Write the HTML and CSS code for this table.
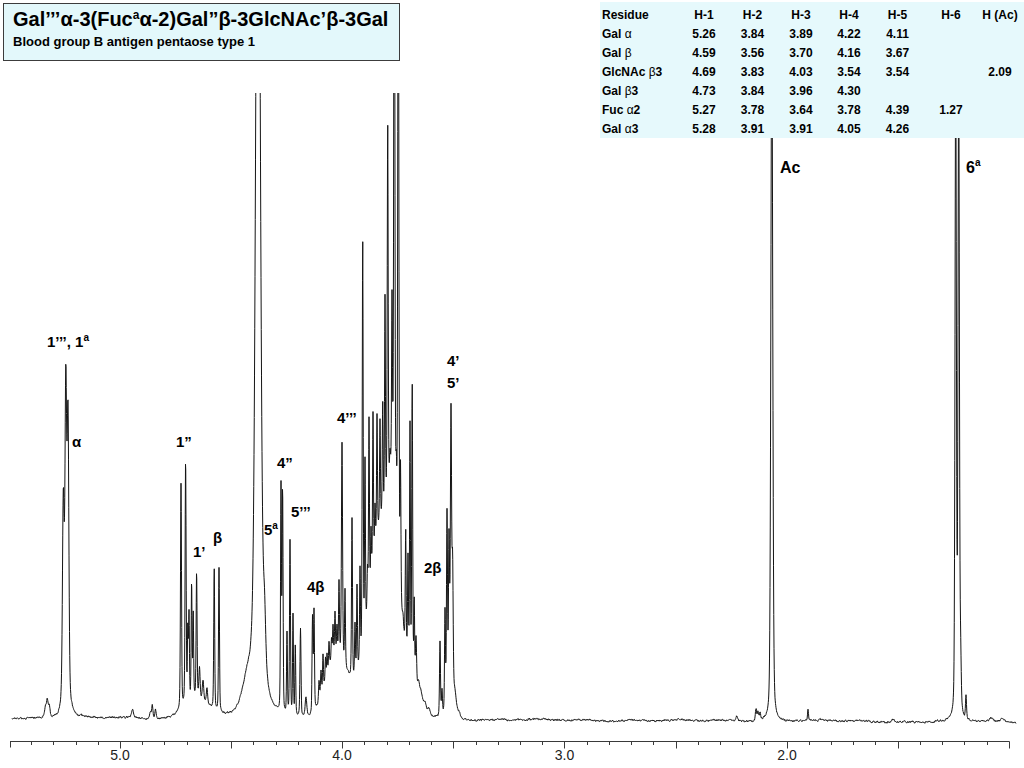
FILE: index.html
```html
<!DOCTYPE html>
<html lang="en">
<head>
<meta charset="utf-8">
<title>Blood group B antigen pentaose type 1 - 1H NMR</title>
<link rel="stylesheet" href="styles.css">
</head>
<body>
<div class="page">
  <svg class="spectrum" width="1024" height="768" viewBox="0 0 1024 768" xmlns="http://www.w3.org/2000/svg">
    <defs>
      <clipPath id="plot-clip"><rect x="0" y="93" width="1024" height="675"/></clipPath>
    </defs>
    <path id="trace" class="trace" clip-path="url(#plot-clip)" d="M12 718 L1016 722"/>
    <g id="axis" class="axis">
      <line class="axis-line" x1="10" y1="741.5" x2="1009.5" y2="741.5"/>
    </g>
    <g class="tick-labels">
      <text x="120" y="760">5.0</text>
      <text x="342" y="760">4.0</text>
      <text x="564.5" y="760">3.0</text>
      <text x="787" y="760">2.0</text>
    </g>
    <g class="peak-labels">
      <text x="47" y="347">1’’’, 1<tspan class="sup" dy="-6">a</tspan></text>
      <text x="72" y="447">α</text>
      <text x="176" y="447">1”</text>
      <text x="193" y="557">1’</text>
      <text x="213" y="543">β</text>
      <text x="264" y="535">5<tspan class="sup" dy="-6">a</tspan></text>
      <text x="277" y="468">4”</text>
      <text x="291" y="517">5’’’</text>
      <text x="307" y="592">4β</text>
      <text x="337" y="423">4’’’</text>
      <text x="424" y="573">2β</text>
      <text x="447" y="366">4’</text>
      <text x="447" y="388">5’</text>
      <text class="big" x="780" y="173">Ac</text>
      <text class="big" x="966" y="173">6<tspan class="sup" dy="-7">a</tspan></text>
    </g>
  </svg>

  <header class="title-box">
    <h1 class="title">Gal’’’α-3(Fuc<sup>a</sup>α-2)Gal”β-3GlcNAc’β-3Gal</h1>
    <p class="subtitle">Blood group B antigen pentaose type 1</p>
  </header>

  <div class="shift-table">
    <span class="res">Residue</span><span>H-1</span><span>H-2</span><span>H-3</span><span>H-4</span><span>H-5</span><span>H-6</span><span>H (Ac)</span>
    <span class="res">Gal <i class="greek">α</i></span><span>5.26</span><span>3.84</span><span>3.89</span><span>4.22</span><span>4.11</span><span></span><span></span>
    <span class="res">Gal <i class="greek">β</i></span><span>4.59</span><span>3.56</span><span>3.70</span><span>4.16</span><span>3.67</span><span></span><span></span>
    <span class="res">GlcNAc <i class="greek">β</i>3</span><span>4.69</span><span>3.83</span><span>4.03</span><span>3.54</span><span>3.54</span><span></span><span>2.09</span>
    <span class="res">Gal <i class="greek">β</i>3</span><span>4.73</span><span>3.84</span><span>3.96</span><span>4.30</span><span></span><span></span><span></span>
    <span class="res">Fuc <i class="greek">α</i>2</span><span>5.27</span><span>3.78</span><span>3.64</span><span>3.78</span><span>4.39</span><span>1.27</span><span></span>
    <span class="res">Gal <i class="greek">α</i>3</span><span>5.28</span><span>3.91</span><span>3.91</span><span>4.05</span><span>4.26</span><span></span><span></span>
  </div>
</div>
<script src="script.js"></script>
</body>
</html>
```

FILE: styles.css
```css
* { box-sizing: border-box; }
html, body { margin: 0; padding: 0; background: #fff; }
body { font-family: "Liberation Sans", Arial, sans-serif; color: #000; }

.page { position: relative; width: 1024px; height: 768px; overflow: hidden; background: #fff; }
.spectrum { display: block; }

.trace { fill: none; stroke: #141414; stroke-width: 1; stroke-linejoin: round; }
.axis-line, .tick { stroke: #3a3a3a; stroke-width: 1; }

.tick-labels text {
  font-family: "Liberation Sans", Arial, sans-serif;
  font-size: 14px;
  fill: #222;
  text-anchor: middle;
}
.peak-labels text {
  font-family: "Liberation Sans", Arial, sans-serif;
  font-weight: bold;
  font-size: 15px;
  fill: #000;
}
.peak-labels .big { font-size: 16px; }
.peak-labels .sup { font-size: 10px; }

.title-box {
  position: absolute;
  left: 3px;
  top: 3px;
  width: 397px;
  height: 58px;
  border: 1px solid #3c3c3c;
  background: #e3f8fb;
  padding: 4px 0 0 9px;
}
.title {
  margin: 0;
  font-size: 20px;
  font-weight: bold;
  line-height: 22px;
  white-space: nowrap;
}
.title sup { font-size: 12px; line-height: 0; vertical-align: 7px; }
.subtitle {
  margin: 3px 0 0;
  font-size: 13px;
  font-weight: bold;
  line-height: 18px;
}

.shift-table {
  position: absolute;
  left: 600px;
  top: 2px;
  width: 424px;
  padding: 3px 0 0 2px;
  background: #e6f9fc;
  display: grid;
  grid-template-columns: 78px 48px 49px 48px 48px 49px 58px 40px;
  grid-auto-rows: 19px;
  align-items: center;
  font-size: 12px;
  font-weight: bold;
}
.shift-table span { text-align: center; white-space: nowrap; }
.shift-table .res { text-align: left; }
.greek { font-style: normal; font-weight: normal; }
```

FILE: script.js
```js
(function () {
  // [x(px), height(px), HWHM(px), lorentzian fraction]
  var P = [
    [45.5, 10, 1.2], [47.3, 17, 0.9], [49.3, 12, 0.9],
    [66, 25, 4, 0.5], [63.3, 195, 1.0], [65.8, 300, 1.0], [68, 272, 1.0],
    [132.5, 8, 1.2], [150.5, 6, 1], [152.3, 12, 0.7], [155.5, 9, 0.7],
    [197, 20, 14, 0],
    [181, 225, 0.6], [185.6, 245, 0.6], [187.8, 70, 0.5], [189, 85, 0.5], [191.6, 115, 0.5],
    [193.2, 85, 0.5], [196.6, 125, 0.55], [199.5, 30, 0.7], [203, 20, 0.8], [207, 15, 0.8],
    [214.2, 140, 0.55], [219, 145, 0.55],
    [258, 1050, 2.6, 0.45], [247, 28, 6, 0.5], [264.5, 55, 1.5, 0.5],
    [281, 225, 0.55], [282.6, 220, 0.55],
    [287, 80, 0.5], [290, 175, 0.55], [293, 100, 0.5], [295.3, 70, 0.5], [300.5, 88, 0.6], [306, 18, 1],
    [312.5, 95, 0.55], [314, 100, 0.55],
    [336, 65, 12, 0], [385, 140, 20, 0], [380, 60, 10, 0], [393, 90, 5, 0],
    [319, 20, 0.6], [321, 25, 0.6], [323, 35, 0.5], [325.5, 22, 0.5], [327, 20, 0.5], [329, 25, 0.5],
    [331.5, 20, 0.5], [333, 30, 0.5], [335, 40, 0.5], [337, 25, 0.5], [339, 70, 0.5],
    [342, 215, 0.65], [345, 75, 0.5],
    [352, 160, 0.55], [355, 50, 0.5], [357, 85, 0.5], [360, 90, 0.5],
    [362.7, 405, 0.55], [365, 170, 0.5], [367.5, 40, 0.5], [369, 180, 0.5], [371, 50, 0.5],
    [373, 150, 0.5], [375, 40, 0.5], [377, 120, 0.5], [380, 100, 0.5], [382.7, 110, 0.5],
    [385, 210, 0.5], [387.7, 370, 0.55], [390, 20, 0.5], [392, 170, 0.5], [394.3, 750, 0.6],
    [396.3, 40, 0.5], [398.3, 750, 0.6], [400.5, 125, 0.5], [403, 10, 0.5],
    [405.7, 115, 0.5], [408, 100, 0.5], [410, 240, 0.5], [412.2, 290, 0.55], [414.2, 80, 0.5],
    [416, 50, 0.7], [418.5, 15, 1.2],
    [421, 12, 1.5], [425, 8, 1.5], [429, 5, 1.5],
    [440, 75, 0.55], [442, 25, 0.6], [445, 100, 0.55], [447, 190, 0.6], [449, 140, 0.6],
    [450.5, 45, 2.5, 0.3], [451, 260, 0.7], [452.6, 120, 0.65], [455, 18, 1.5], [458.5, 6, 2],
    [736.7, 5, 1], [756, 12, 0.7], [758, 9, 0.7], [760, 8, 0.7],
    [771.8, 700, 1.1], [808, 11, 0.55],
    [955.7, 650, 0.8], [958.7, 640, 0.8], [960.6, 50, 0.7], [966, 22, 0.6],
    [893, 3, 1.5], [991, 3, 1.5], [1003, 3, 1.5]
  ];

  function signal(x) {
    var s = 0;
    for (var i = 0; i < P.length; i++) {
      var p = P[i];
      var d = (x - p[0]) / p[2];
      var d2 = d * d;
      var eta = p.length > 3 ? p[3] : 0.3;
      s += p[1] * ((1 - eta) * Math.exp(-0.6931 * d2) + eta / (1 + d2));
    }
    return s;
  }

  var seed = 20240611;
  function rnd() {
    seed = (seed * 1664525 + 1013904223) % 4294967296;
    return seed / 4294967296;
  }

  var parts = [];
  var n = 0;
  for (var x = 12; x <= 1016.001; x += 0.25) {
    n = 0.7 * n + (rnd() - 0.5) * 1.4;
    var base = 718 + 4 * (x - 12) / 1004 + 0.6 * Math.sin(x / 23) + 0.4 * Math.sin(x / 7.3);
    var y = base + n - signal(x);
    parts.push((parts.length ? 'L' : 'M') + x.toFixed(2) + ' ' + y.toFixed(2));
  }
  document.getElementById('trace').setAttribute('d', parts.join(''));

  var axis = document.getElementById('axis');
  var NS = 'http://www.w3.org/2000/svg';
  function tick(x, len) {
    var l = document.createElementNS(NS, 'line');
    l.setAttribute('class', 'tick');
    l.setAttribute('x1', x);
    l.setAttribute('x2', x);
    l.setAttribute('y1', 741.5);
    l.setAttribute('y2', 741.5 + len);
    axis.appendChild(l);
  }
  tick(10.5, 6);
  for (var t = 54; t >= 10; t--) {
    var px = 120 + (50 - t) / 10 * 222.2;
    tick(Math.round(px) + 0.5, t % 5 === 0 ? 7 : 3.5);
  }
})();
```
